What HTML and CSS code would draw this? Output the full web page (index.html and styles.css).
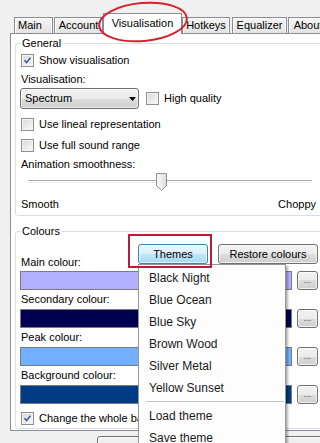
FILE: index.html
```html
<!DOCTYPE html>
<html>
<head>
<meta charset="utf-8">
<link rel="stylesheet" href="styles.css">
</head>
<body>
<div class="dialog">
  <div class="tabs">
    <div class="tab tab-main">Main</div>
    <div class="tab tab-account">Account</div>
    <div class="tab tab-active">Visualisation
      <svg class="mark-ellipse" width="92" height="42" viewBox="0 0 92 42"><ellipse cx="46" cy="21" rx="44" ry="19" transform="rotate(-5 46 21)" fill="none" stroke="#d4222f" stroke-width="2"/></svg>
    </div>
    <div class="tab tab-hotkeys">Hotkeys</div>
    <div class="tab tab-eq">Equalizer</div>
    <div class="tab tab-about">About</div>
  </div>
  <div class="panel">
    <fieldset class="group group-general">
      <legend>General</legend>
      <div class="row"><span class="cb"><svg viewBox="0 0 13 13"><path d="M3 6.3 L5.3 9 L10 3.3" fill="none" stroke="#3e5494" stroke-width="1.8"/></svg></span><span>Show visualisation</span></div>
      <div class="label-row">Visualisation:</div>
      <div class="select-row">
        <div class="combo"><span>Spectrum</span><svg class="combo-arrow" width="7" height="4" viewBox="0 0 7 4"><path d="M0 0 H7 L3.5 4 Z" fill="#000"/></svg></div>
        <span class="cb cb-hq"></span><span>High quality</span>
      </div>
      <div class="row mt5"><span class="cb"></span><span>Use lineal representation</span></div>
      <div class="row mt1"><span class="cb"></span><span>Use full sound range</span></div>
      <div class="label-row">Animation smoothness:</div>
      <div class="slider">
        <div class="groove"></div>
        <svg class="thumb" style="left:45%" width="11" height="18" viewBox="0 0 11 18"><defs><linearGradient id="tg" x1="0" y1="0" x2="1" y2="0"><stop offset="0" stop-color="#fbfbfb"/><stop offset="1" stop-color="#dcdcdc"/></linearGradient></defs><path d="M0.5 0.5 H10.5 V12.5 L5.5 17.5 L0.5 12.5 Z" fill="url(#tg)" stroke="#8e8f8f"/></svg>
      </div>
      <div class="ends"><span>Smooth</span><span>Choppy</span></div>
    </fieldset>

    <fieldset class="group group-colours">
      <legend>Colours</legend>
      <div class="colours-head">
        <span class="head-label">Main colour:</span>
        <div class="theme-wrap">
          <button class="btn btn-hot btn-themes">Themes</button>
          <div class="mark-rect"></div>
          <div class="menu">
            <div class="menu-item">Black Night</div>
            <div class="menu-item">Blue Ocean</div>
            <div class="menu-item">Blue Sky</div>
            <div class="menu-item">Brown Wood</div>
            <div class="menu-item">Silver Metal</div>
            <div class="menu-item">Yellow Sunset</div>
            <div class="menu-sep"></div>
            <div class="menu-item">Load theme</div>
            <div class="menu-item">Save theme</div>
          </div>
        </div>
        <button class="btn btn-restore">Restore colours</button>
      </div>
      <div class="swatch-row"><div class="swatch sw-main"></div><button class="btn btn-dots">...</button></div>
      <div class="colour-label">Secondary colour:</div>
      <div class="swatch-row"><div class="swatch sw-secondary"></div><button class="btn btn-dots">...</button></div>
      <div class="colour-label">Peak colour:</div>
      <div class="swatch-row"><div class="swatch sw-peak"></div><button class="btn btn-dots">...</button></div>
      <div class="colour-label">Background colour:</div>
      <div class="swatch-row"><div class="swatch sw-back"></div><button class="btn btn-dots">...</button></div>
      <div class="row row-last"><span class="cb"><svg viewBox="0 0 13 13"><path d="M3 6.3 L5.3 9 L10 3.3" fill="none" stroke="#3e5494" stroke-width="1.8"/></svg></span><span>Change the whole background</span></div>
    </fieldset>
  </div>
  <div class="footer">
    <button class="btn btn-foot">OK</button>
    <button class="btn btn-foot">Cancel</button>
    <button class="btn btn-foot">Apply</button>
  </div>
</div>
</body>
</html>
```

FILE: styles.css
```css
html, body {
  margin: 0;
  padding: 0;
  overflow: hidden;
  background: #f0f0f0;
}
body {
  width: 320px;
  height: 443px;
  font: 11px/13px "Liberation Sans", Arial, sans-serif;
  color: #000;
}
.dialog {
  padding-top: 13px;
  width: 340px;
}

/* tabs */
.tabs {
  display: flex;
  align-items: flex-end;
  height: 21px;
  padding-left: 14px;
  margin-bottom: -1px;
  position: relative;
  z-index: 2;
}
.tab {
  box-sizing: border-box;
  height: 16px;
  margin-bottom: 1px;
  margin-right: 1px;
  padding-top: 1px;
  border: 1px solid #898c95;
  border-bottom: none;
  background: linear-gradient(#f4f4f4, #e3e3e3);
  box-shadow: inset 1px 1px 0 #fff, inset -1px 0 0 #fff;
  text-align: center;
  line-height: 13px;
  white-space: nowrap;
}
.tab-main { width: 39px; text-align: left; padding-left: 3px; }
.tab-account { width: 49px; margin-right: 0; }
.tab-active {
  position: relative;
  width: 79px;
  height: 21px;
  margin-bottom: 0;
  margin-right: 0;
  padding-top: 3px;
  background: #fff;
  box-shadow: none;
}
.tab-hotkeys { width: 48px; margin-right: 2px; }
.tab-eq { width: 55px; }
.tab-about { width: 40px; }

.mark-ellipse {
  position: absolute;
  left: -7px;
  top: -13px;
  overflow: visible;
  z-index: 5;
}

/* panel */
.panel {
  box-sizing: border-box;
  width: 330px;
  margin-left: 10px;
  border: 1px solid #898c95;
  background: #fff;
  padding: 0 16px 1px 4px;
}
.group {
  margin: 3px 0 0 0;
  border: 1px solid #d5dfe5;
  border-radius: 3px;
  padding: 0 4px 2px 5px;
  min-width: 0;
}
.group legend {
  padding: 0 1px;
  line-height: 13px;
}
.group-colours {
  margin-top: 9px;
  padding-bottom: 0;
}

.row {
  display: flex;
  align-items: center;
  height: 20px;
  white-space: nowrap;
}
.mt5 { margin-top: 5px; }
.mt1 { margin-top: 1px; }
.label-row {
  height: 18px;
  line-height: 18px;
}
.cb {
  box-sizing: border-box;
  flex: none;
  width: 13px;
  height: 13px;
  margin-right: 5px;
  border: 1px solid #8e8f8f;
  background: linear-gradient(135deg, #d8d8d8, #fafafa);
  box-shadow: inset 0 0 0 1px #f3f3f3;
  display: flex;
}
.cb svg {
  width: 11px;
  height: 11px;
  margin: 0;
}

.select-row {
  display: flex;
  align-items: center;
  height: 21px;
}
.combo {
  box-sizing: border-box;
  width: 119px;
  height: 21px;
  margin-left: -1px;
  margin-right: 7px;
  border: 1px solid #707070;
  border-radius: 3px;
  background: linear-gradient(#f2f2f2 0%, #ebebeb 50%, #dddddd 50%, #cfcfcf 100%);
  box-shadow: inset 0 0 0 1px rgba(255,255,255,0.6);
  display: flex;
  align-items: center;
  justify-content: space-between;
  padding: 0 2px 0 4px;
}
.combo-arrow { margin-top: 1px; }

.slider {
  position: relative;
  height: 18px;
  margin: 0 6px 0 7px;
}
.groove {
  position: absolute;
  left: 0;
  right: 0;
  top: 7px;
  height: 1px;
  border-top: 1px solid #a9a9a9;
  border-bottom: 1px solid #eeeeee;
}
.thumb {
  position: absolute;
  top: 0;
}
.ends {
  display: flex;
  justify-content: space-between;
  height: 18px;
  line-height: 18px;
  margin-top: 4px;
  padding-right: 2px;
}

/* buttons */
.btn {
  box-sizing: border-box;
  font: inherit;
  color: #000;
  padding: 0;
  margin: 0;
  border: 1px solid #707070;
  border-radius: 3px;
  background: linear-gradient(#f2f2f2 0%, #ebebeb 50%, #dddddd 50%, #cfcfcf 100%);
  box-shadow: inset 0 0 0 1px rgba(255,255,255,0.7);
  text-align: center;
}
.btn-hot {
  border-color: #3c7fb1;
  background: linear-gradient(#eaf6fd 0%, #d9f0fc 50%, #bee6fd 50%, #a7d9f5 100%);
}

.colours-head {
  display: flex;
  align-items: flex-start;
  height: 33px;
}
.head-label {
  flex: 1;
  margin-top: 18px;
  line-height: 13px;
  white-space: nowrap;
}
.theme-wrap {
  position: relative;
  margin-top: 6px;
  margin-right: 10px;
  width: 70px;
  height: 20px;
}
.btn-themes {
  width: 70px;
  height: 20px;
  display: block;
}
.btn-restore {
  margin-top: 6px;
  width: 100px;
  height: 20px;
}
.mark-rect {
  position: absolute;
  left: -10px;
  top: -10px;
  width: 84px;
  height: 34px;
  box-sizing: border-box;
  border: 2px solid #b91d3b;
  z-index: 11;
}

.menu {
  position: absolute;
  left: 0;
  top: 100%;
  z-index: 10;
  box-sizing: border-box;
  width: 148px;
  border: 1px solid #979797;
  background: #fdfdfd;
  padding: 2px 1px;
  box-shadow: 2px 2px 2px rgba(0,0,0,0.3);
  font-size: 12px;
  color: #1a1a1a;
  text-align: left;
}
.menu-item {
  height: 22px;
  line-height: 22px;
  padding-left: 9px;
  white-space: nowrap;
}
.menu-sep {
  height: 6px;
  margin: 0 0 0 6px;
  position: relative;
}
.menu-sep::before {
  content: "";
  position: absolute;
  left: 0;
  right: 0;
  top: 2px;
  height: 1px;
  background: #c5c5c5;
  border-bottom: 1px solid #fff;
}

.swatch-row {
  display: flex;
  height: 19px;
}
.swatch {
  flex: 1;
  box-sizing: border-box;
  margin-left: -1px;
  margin-right: 5px;
  border: 1px solid #7b7b7b;
}
.sw-main { background: #b0b0ff; }
.sw-secondary { background: #000050; }
.sw-peak { background: #70b0ff; }
.sw-back { background: #003c86; }
.btn-dots {
  width: 21px;
  height: 19px;
  font-size: 9px;
  line-height: 15px;
  color: #444;
}
.colour-label {
  height: 19px;
  line-height: 19px;
  white-space: nowrap;
}
.row-last {
  margin-top: 4px;
  overflow: hidden;
}

.footer {
  display: flex;
  gap: 6px;
  margin-top: 5px;
  padding-left: 97px;
}
.btn-foot {
  width: 75px;
  height: 23px;
  flex: none;
  padding-top: 14px;
  line-height: 13px;
}
```
